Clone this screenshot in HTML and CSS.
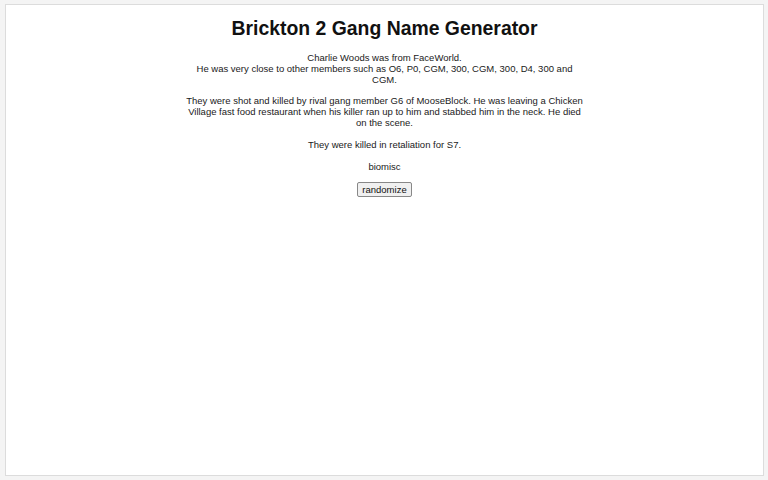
FILE: index.html
```html
<!DOCTYPE html>
<html>
<head>
<meta charset="utf-8">
<link rel="stylesheet" href="styles.css">
</head>
<body>
<div class="frame">
  <h1 class="title">Brickton 2 Gang Name Generator</h1>
  <div class="story">
    <p>Charlie Woods was from FaceWorld.<br>He was very close to other members such as O6, P0, CGM, 300, CGM, 300, D4, 300 and CGM.</p>
    <p>They were shot and killed by rival gang member G6 of MooseBlock. He was leaving a Chicken Village fast food restaurant when his killer ran up to him and stabbed him in the neck. He died on the scene.</p>
    <p>They were killed in retaliation for S7.</p>
    <p>biomisc</p>
  </div>
  <button class="btn">randomize</button>
</div>
</body>
</html>
```
FILE: styles.css
```css
html, body {
  margin: 0;
  padding: 0;
  background: #f4f4f4;
}
body {
  padding: 4px 4px 4px 5px;
  font-family: "Liberation Sans", Arial, sans-serif;
  color: #111;
}
.frame {
  background: #fff;
  border: 1px solid #dcdcdc;
  box-sizing: border-box;
  height: 472px;
  display: flex;
  flex-direction: column;
  align-items: center;
  text-align: center;
}
.title {
  font-size: 19.4px;
  font-weight: bold;
  margin: 12px 0 13px;
  line-height: 23px;
}
.story {
  width: 403px;
  font-size: 9.5px;
  line-height: 10.8px;
  color: #1a1a1a;
}
.story p {
  margin: 0 0 11px;
}
.btn {
  font-family: "Liberation Sans", Arial, sans-serif;
  font-size: 9.5px;
  line-height: 11px;
  padding: 1px 4px;
  margin-top: -1px;
  background: #f0f0f0;
  border: 1px solid #888;
  border-radius: 2px;
  color: #111;
}
```
